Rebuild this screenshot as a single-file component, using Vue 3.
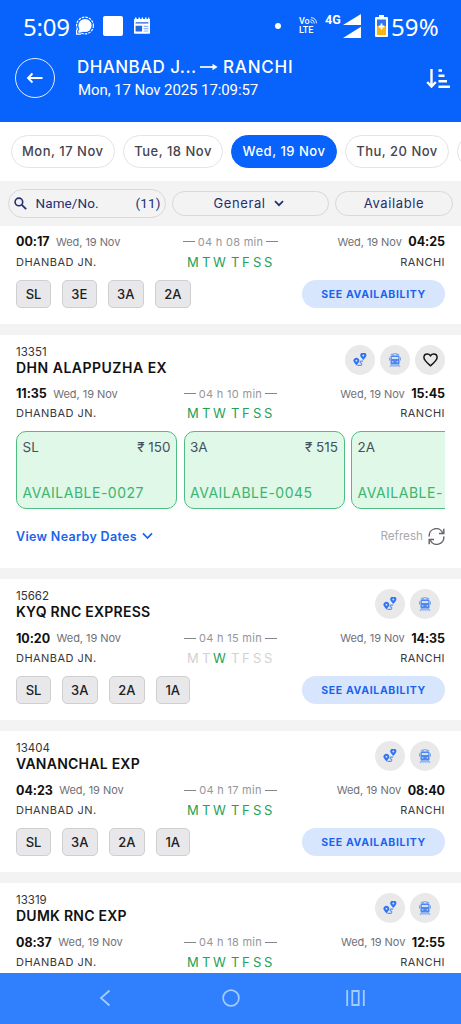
<script setup>
const dates = [
  { label: 'Mon, 17 Nov', w: 'w1' },
  { label: 'Tue, 18 Nov', w: 'w2' },
  { label: 'Wed, 19 Nov', w: 'w3', active: true },
  { label: 'Thu, 20 Nov', w: 'w4' },
  { label: '', w: 'w4' },
]
const days = ['M', 'T', 'W', 'T', 'F', 'S', 'S']
const trains = [
  { dep: '00:17', arr: '04:25', dur: '04 h 08 min', chips: ['SL', '3E', '3A', '2A'], runs: 'all', cut: true },
  {
    no: '13351', name: 'DHN ALAPPUZHA EX', dep: '11:35', arr: '15:45', dur: '04 h 10 min', runs: 'all', liked: true,
    fares: [
      { cls: 'SL', price: '₹ 150', status: 'AVAILABLE-0027' },
      { cls: '3A', price: '₹ 515', status: 'AVAILABLE-0045' },
      { cls: '2A', price: '', status: 'AVAILABLE-' },
    ],
  },
  { no: '15662', name: 'KYQ RNC EXPRESS', dep: '10:20', arr: '14:35', dur: '04 h 15 min', chips: ['SL', '3A', '2A', '1A'], runs: 'wed' },
  { no: '13404', name: 'VANANCHAL EXP', dep: '04:23', arr: '08:40', dur: '04 h 17 min', chips: ['SL', '3A', '2A', '1A'], runs: 'all' },
  { no: '13319', name: 'DUMK RNC EXP', dep: '08:37', arr: '12:55', dur: '04 h 18 min', runs: 'all', chips: [] },
]
</script>

<template>
  <div class="screen">
    <header class="top">
      <div class="status">
        <span class="clock">5:09</span>
        <svg class="chat" width="20" height="20" viewBox="0 0 20 20">
          <circle cx="10" cy="9.5" r="6.6" fill="#fff" />
          <path d="M3.4 17l1.3-5 3.4 3.4z" fill="#fff" />
          <circle cx="10" cy="9.5" r="8.4" fill="none" stroke="#fff" stroke-width="1.2" stroke-dasharray="2.6 1" />
          <path d="M1.6 13.5v4.6h4.6" fill="none" stroke="#fff" stroke-width="1.2" />
        </svg>
        <span class="square"></span>
        <svg class="news" width="18" height="18" viewBox="0 0 18 18">
          <path d="M1 2h1V.5h1.500V2h2V.5H7V2h1.600V.5h1.500V2H12V.5h1.500V2h1.600V.5h1.200V2h.7v14a.8.8 0 0 1-.8.8H1.800A.8.8 0 0 1 1 16z" fill="#fff" />
          <path d="M2.600 5.200h12.800v1.300H2.600zM2.600 8.800h6.500v5.700H2.600z" fill="#2467dd" />
          <path d="M10.700 9.300h4.700M10.700 11.700h4.700M10.700 14h4.700" stroke="#8fb3f5" stroke-width="1.200" />
        </svg>
        <span class="dot"></span>
        <span class="volte"><span class="vo">Vo<svg width="7" height="7" viewBox="0 0 7 7"><path d="M.5 2.600A4 4 0 0 1 4.400 6.500M1 .6A6 6 0 0 1 6.500 6.300M.3 4.700A2 2 0 0 1 2.200 6.500" fill="none" stroke="#fff" stroke-width=".9" /></svg></span><span>LTE</span></span>
        <span class="g4">4G</span>
        <svg class="signal" width="18" height="24" viewBox="0 0 18 24"><path d="M0 11L18 0v11zM0 24L18 12.800V24z" fill="#fff" /></svg>
        <svg class="battery" width="13" height="22" viewBox="0 0 13 22">
          <path d="M4 0h5v2h3a1 1 0 0 1 1 1v18a1 1 0 0 1-1 1H1a1 1 0 0 1-1-1V3a1 1 0 0 1 1-1h3z" fill="#fff" />
          <path d="M2 4.500h9V11H2z" fill="#2f74ee" />
          <path d="M2 11h9v9H2z" fill="#fbb416" />
          <path d="M6.500 8.500v6M3.700 11.500h5.600" stroke="#fff" stroke-width="1.800" />
        </svg>
        <span class="pct">59%</span>
      </div>
      <div class="route">
        <button class="back">
          <svg width="18" height="14" viewBox="0 0 18 14"><path d="M16.500 7H2M6.500 2.500L2 7l4.500 4.500" fill="none" stroke="#fff" stroke-width="1.800" /></svg>
        </button>
        <div class="titles">
          <div class="title">
            <span class="from">DHANBAD J...</span>
            <svg width="18" height="8" viewBox="0 0 18 8"><path d="M0 4h15" stroke="#fff" stroke-width="1.700" /><path d="M12.500.8L17.600 4l-5.100 3.200z" fill="#fff" /></svg>
            <span class="to">RANCHI</span>
          </div>
          <div class="stamp">Mon, 17 Nov 2025 17:09:57</div>
        </div>
        <svg class="sort" width="25" height="20" viewBox="0 0 25 20">
          <path d="M5.500 0v17M1.200 13l4.300 4.500L9.800 13" fill="none" stroke="#fff" stroke-width="2.400" />
          <path d="M12.500 1.500H16M12.500 6.700h6M12.500 12.200h8.500M12.500 17.700H24" stroke="#fff" stroke-width="2.500" />
        </svg>
      </div>
    </header>

    <nav class="dates">
      <span v-for="d in dates" :key="d.label" class="date" :class="[d.w, { active: d.active }]">{{ d.label }}</span>
    </nav>

    <div class="filters">
      <div class="search">
        <svg width="13" height="13" viewBox="0 0 13 13"><circle cx="4.900" cy="4.900" r="3.800" fill="none" stroke="#25306f" stroke-width="1.600" /><path d="M7.800 7.800l4.400 4.400" stroke="#25306f" stroke-width="1.800" /></svg>
        <span class="ph">Name/No.</span><span class="count">(11)</span>
      </div>
      <div class="general"><span>General</span><svg width="10" height="7" viewBox="0 0 10 7"><path d="M1 1.200l4 4 4-4" fill="none" stroke="#25306f" stroke-width="1.700" /></svg></div>
      <div class="avail">Available</div>
    </div>

    <main class="list">
      <section v-for="t in trains" :key="t.dep" class="card" :class="{ cut: t.cut, open: t.fares }">
        <div v-if="t.no" class="head">
          <div class="names"><div class="no">{{ t.no }}</div><div class="name">{{ t.name }}</div></div>
          <div class="actions" :class="{ three: t.liked }">
            <span class="act"><svg width="14" height="14" viewBox="0 0 14 14">
              <path d="M3.400 12.600L1 9.300a2.900 2.900 0 1 1 4.800 0zM10.300 7L7.800 3.900a3 3 0 1 1 5 0z" fill="#2f74f0" />
              <circle cx="3.400" cy="7.700" r=".9" fill="#dfe9fb" /><circle cx="10.300" cy="2.500" r=".9" fill="#dfe9fb" />
              <path d="M4.300 12.400h3.200c1.700 0 1.700-2.200.3-2.400-1.100-.3-.8-1.900.7-1.900h1.600" fill="none" stroke="#5d90f0" stroke-width="1.100" />
            </svg></span>
            <span class="act"><svg width="12" height="14" viewBox="0 0 12 14">
              <path d="M1.800 1.600Q6-.4 10.200 1.600M4 1v2M8 1v2" fill="none" stroke="#6898ee" stroke-width=".9" />
              <path d="M2.500 2.500h7q1 0 1 1.200v6.800q0 1-1 1h-7q-1 0-1-1V3.700q0-1.200 1-1.200z" fill="#4c88f0" />
              <path d="M2.700 4h6.600v2H2.700z" fill="#d4e1f8" /><path d="M.6 4.500v3M11.400 4.500v3" stroke="#5d91ee" stroke-width=".9" />
              <path d="M2.900 8.800h1.500M7.600 8.800h1.500" stroke="#dce8ff" stroke-width="1" />
              <path d="M2.800 11.300L1 13.900M9.200 11.300l1.800 2.600M2.300 12.900h7.400" stroke="#5d91ee" stroke-width=".9" />
            </svg></span>
            <span v-if="t.liked" class="act"><svg width="15" height="14" viewBox="0 0 15 14"><path d="M7.500 12.700C3.500 9.300.9 7.200.9 4.500.9 2.500 2.400 1 4.300 1c1.300 0 2.500.7 3.200 1.700C8.200 1.700 9.400 1 10.700 1c1.900 0 3.400 1.500 3.400 3.500 0 2.700-2.600 4.800-6.600 8.200z" fill="none" stroke="#16161a" stroke-width="1.500" /></svg></span>
          </div>
        </div>
        <div class="times">
          <div class="side"><b>{{ t.dep }}</b><span class="day">Wed, 19 Nov</span></div>
          <div class="dur"><i></i><span>{{ t.dur }}</span><i></i></div>
          <div class="side right"><span class="day">Wed, 19 Nov</span><b>{{ t.arr }}</b></div>
        </div>
        <div class="stations">
          <span class="st from-st">DHANBAD JN.</span>
          <div class="week"><span v-for="(d, i) in days" :key="i" :class="{ off: t.runs === 'wed' && i !== 2 }">{{ d }}</span></div>
          <span class="st to-st">RANCHI</span>
        </div>
        <div v-if="t.chips && t.chips.length" class="row">
          <div class="chips"><span v-for="c in t.chips" :key="c" class="chip" :class="'c' + c">{{ c }}</span></div>
          <button class="see">SEE AVAILABILITY</button>
        </div>
        <template v-if="t.fares">
          <div class="fares">
            <div v-for="f in t.fares" :key="f.cls" class="fare">
              <div class="ft"><span>{{ f.cls }}</span><span>{{ f.price }}</span></div>
              <div class="fs">{{ f.status }}</div>
            </div>
          </div>
          <div class="foot">
            <div class="nearby"><span>View Nearby Dates</span><svg width="11" height="8" viewBox="0 0 11 8"><path d="M1 1.300l4.500 4.700L10 1.300" fill="none" stroke="#1b63ee" stroke-width="1.700" /></svg></div>
            <div class="refresh"><span>Refresh</span><svg width="17" height="17" viewBox="0 0 17 17">
              <path d="M1.200 8.500A7.100 7.100 0 0 1 14.800 5M15.800 8.500A7.100 7.100 0 0 1 2.200 12" fill="none" stroke="#66666c" stroke-width="1.500" />
              <path d="M15.800.8V5.600H11M1.200 16.200V11.400H6" fill="none" stroke="#66666c" stroke-width="1.500" />
            </svg></div>
          </div>
        </template>
      </section>
    </main>

    <footer class="bottom">
      <svg width="12" height="18" viewBox="0 0 12 18"><path d="M10.500 1.500L2 9l8.500 7.500" fill="none" stroke="#a4ccff" stroke-width="1.800" /></svg>
      <svg class="home" width="18" height="18" viewBox="0 0 18 18"><circle cx="9" cy="9" r="7.900" fill="none" stroke="#a4ccff" stroke-width="1.700" /></svg>
      <svg width="19" height="16" viewBox="0 0 19 16"><path d="M1.200 0v16M17.800 0v16M6.300 1h6.400v14H6.300z" fill="none" stroke="#a4ccff" stroke-width="1.800" /></svg>
    </footer>
  </div>
</template>

<style>
body { margin: 0; }
</style>
<style scoped>
.screen { width: 461px; height: 1024px; overflow: hidden; display: flex; flex-direction: column; background: #fff; font-family: Inter, "Noto Sans", sans-serif; }
.screen * { box-sizing: border-box; }
svg { display: block; flex: none; }
button { border: 0; padding: 0; background: none; font-family: inherit; }
span { white-space: nowrap; }
.top { height: 122.400px; flex: none; background: #0763fb; color: #fff; }
.status { height: 54px; display: flex; align-items: center; padding-left: 22px; }
.clock, .pct { font: 24px/30px "Noto Sans", sans-serif; letter-spacing: -.2px; }
.pct { letter-spacing: .1px; }
.clock { width: 53px; padding-left: 1px; }
.square { width: 20px; height: 20px; border-radius: 2px; background: #fff; margin-left: 8px; }
.chat, .square, .news, .dot, .volte, .battery { margin-bottom: 2px; }
.news { margin-left: 10px; }
.dot { width: 6px; height: 6px; border-radius: 50%; background: #fff; margin-left: 124px; }
.volte { display: flex; flex-direction: column; width: 19px; margin-left: 18px; font: 500 9px/9px Roboto, sans-serif; }
.vo { display: flex; }
.g4 { font: bold 12.500px/14px Roboto, sans-serif; margin-left: 7px; margin-bottom: 15px; width: 18px; }
.signal { margin-bottom: 2px; }
.battery { margin-left: 14px; }
.pct { margin-left: 3px; }
.route { display: flex; align-items: flex-start; height: 68px; padding: 4px 10px 0 15px; }
.back { width: 40px; height: 40px; border: 1.500px solid #e4eeff; border-radius: 50%; display: flex; align-items: center; justify-content: center; flex: none; }
.titles { margin-left: 22px; width: 240px; }
.title { height: 20px; margin-top: -1px; display: flex; align-items: center; font-weight: 500; font-size: 17px; }
.from { width: 119px; letter-spacing: .42px; }
.title svg { margin: -1px 9px 0 4px; }
.to { margin-left: -4px; letter-spacing: .8px; }
.stamp { font: 15px/20px Roboto, sans-serif; margin: 3px 0 0 1px; letter-spacing: -.1px; }
.sort { margin: 11px 0 0 auto; }
.dates { height: 58.600px; flex: none; display: flex; gap: 8px; padding: 12.600px 0 0 10.500px; overflow: hidden; }
.date { height: 33px; border: 1px solid #e3e3e8; border-radius: 17px; display: flex; align-items: center; justify-content: center; font-weight: 500; font-size: 13px; color: #45454f; letter-spacing: .5px; flex: none; }
.w1 { width: 104.500px; } .w2 { width: 100px; } .w3 { width: 106px; } .w4 { width: 104px; }
.date.active { background: #0763fb; border-color: #0763fb; color: #fff; }
.filters { height: 45px; flex: none; background: #f3f3f4; display: flex; align-items: flex-start; padding: 8px 8px 0; color: #25306f; font-size: 13px; }
.filters > div { border: 1px solid #d8d8dd; border-radius: 15px; display: flex; align-items: center; }
.search { width: 158px; height: 29px; padding: 0 4.500px; font: 13.500px/20px Roboto, sans-serif; letter-spacing: .1px; }
.ph { margin-left: 9px; }
.count { margin-left: auto; }
.general, .avail { height: 25px; margin-top: 2px; justify-content: center; letter-spacing: .6px; }
.general { width: 157px; margin-left: 6px; gap: 8px; padding-right: 4px; }
.avail { width: 118px; margin-left: 6px; }
.list { flex: 1; min-height: 0; overflow: hidden; display: flex; flex-direction: column; gap: 10.600px; background: #f3f3f4; }
.card { height: 141.300px; flex: none; background: #fff; padding: 9.600px 16px 0; overflow: hidden; }
.cut { height: 98px; padding-top: 7px; }
.open { height: 233.600px; padding-top: 9.200px; }
.head { display: flex; justify-content: space-between; height: 41px; }
.no { font-size: 11.500px; line-height: 16px; color: #333338; }
.name { font-size: 14px; line-height: 15px; font-weight: 600; color: #111; letter-spacing: .25px; }
.open .name { letter-spacing: .5px; }
.actions { display: flex; gap: 5px; padding-right: 5px; margin-top: .5px; }
.actions.three { padding-right: 0; margin-top: 1.200px; }
.act { width: 30px; height: 30px; border-radius: 50%; background: #e9e9ea; display: flex; align-items: center; justify-content: center; }
.times { display: grid; grid-template-columns: 150px 1fr 150px; height: 18px; }
.side { display: flex; align-items: center; gap: 6.500px; font-size: 12.500px; color: #111; }
.side b { font-weight: 700; letter-spacing: -.05px; }
.right { justify-content: flex-end; }
.day { font-size: 11px; color: #707077; letter-spacing: -.05px; }
.dur { display: flex; justify-content: center; align-items: center; gap: 3px; font-size: 11px; color: #96969b; letter-spacing: .3px; }
.dur i { width: 12px; height: 1px; background: #85858a; }
.stations { display: grid; grid-template-columns: 150px 1fr 150px; height: 20px; align-items: center; margin-top: .5px; }
.cut .stations { margin-top: 1px; }
.st { font-size: 11px; color: #38383d; letter-spacing: .45px; }
.to-st { text-align: right; }
.week { display: grid; grid-template-columns: 15px 11px 18px 11px 11px 11px 10px; justify-content: center; font-size: 13px; color: #22a255; }
.week .off { color: #d1d1d4; }
.row { display: flex; justify-content: space-between; margin-top: 8px; }
.chips { display: flex; gap: 10.500px; }
.chip { width: 36.500px; height: 28px; border: 1px solid #cfcfd2; border-radius: 5px; background: #e8e8ea; display: flex; align-items: center; justify-content: center; font-size: 13px; font-weight: 500; color: #202024; }
.cSL { width: 35px; } .c3E { width: 35.500px; } .c1A { width: 34.500px; }
.see { width: 143px; height: 28px; padding-top: 1.500px; border-radius: 14px; background: #d8e6fd; color: #1b63ee; font-weight: 700; font-size: 10.500px; letter-spacing: .65px; }
.fares { display: flex; gap: 6.500px; overflow: hidden; margin-top: 8px; }
.fare { width: 161px; height: 78px; flex: none; border: 1px solid #4fbd82; border-radius: 10px; background: #dff8e8; padding: 6px 5.500px 0; }
.ft { display: flex; justify-content: space-between; font-size: 13.500px; line-height: 18px; color: #46505a; }
.fs { font-size: 14px; line-height: 18px; margin-top: 27.500px; color: #3bb56f; letter-spacing: .5px; }
.foot { display: flex; justify-content: space-between; align-items: center; height: 22px; margin-top: 16px; }
.nearby { display: flex; align-items: center; gap: 5px; color: #1b63ee; font-weight: 600; font-size: 12.500px; letter-spacing: .33px; }
.refresh { display: flex; align-items: center; gap: 5px; color: #a9a9ae; font-size: 11.700px; }
.bottom { height: 51px; flex: none; background: #3080fe; display: flex; align-items: center; justify-content: space-between; padding: 0 96px 1px 99px; }
.home { margin: 0 -2px 0 2px; }
</style>
